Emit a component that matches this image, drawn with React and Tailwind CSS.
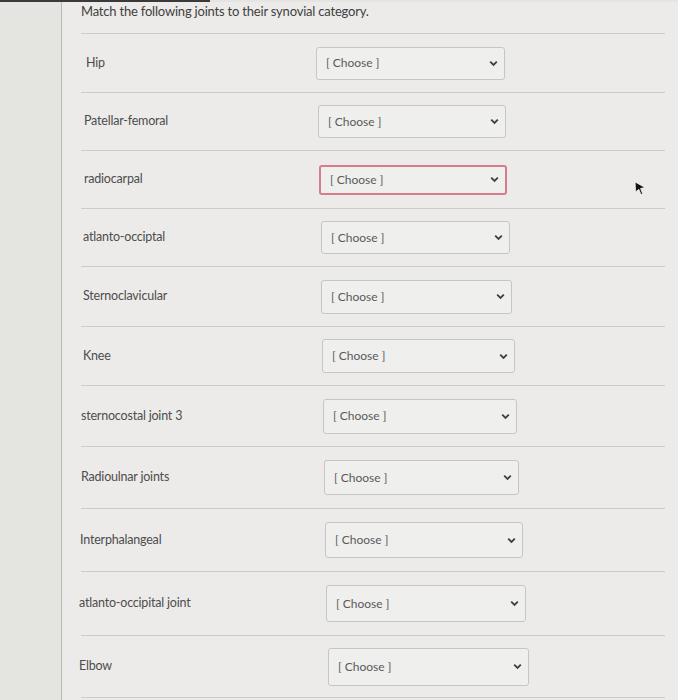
import React from "react";

const rows = [
  { label: "Hip", h: 59, lx: 85, sx: 315, sw: 189, sh: 33 },
  { label: "Patellar-femoral", h: 58, lx: 83, sx: 317, sw: 188, sh: 33 },
  { label: "radiocarpal", h: 58, lx: 83, sx: 318, sw: 188, sh: 30, error: true },
  { label: "atlanto-occiptal", h: 58, lx: 82, sx: 320, sw: 189, sh: 33 },
  { label: "Sternoclavicular", h: 60, lx: 82, sx: 320, sw: 191, sh: 34 },
  { label: "Knee", h: 59, lx: 82, sx: 321, sw: 193, sh: 34 },
  { label: "sternocostal joint 3", h: 61, lx: 80, sx: 322, sw: 194, sh: 35 },
  { label: "Radioulnar joints", h: 62, lx: 80, sx: 323, sw: 195, sh: 35 },
  { label: "Interphalangeal", h: 63, lx: 79, sx: 324, sw: 198, sh: 36 },
  { label: "atlanto-occipital joint", h: 64, lx: 78, sx: 325, sw: 200, sh: 37 },
  { label: "Elbow", h: 62, lx: 78, sx: 327, sw: 201, sh: 38 },
];

const Chevron = () => (
  <svg width="9" height="7" viewBox="0 0 9 7" className="shrink-0">
    <path d="M1.2 1.6 L4.5 4.9 L7.8 1.6" fill="none" stroke="#3f3f3f" strokeWidth="1.8" />
  </svg>
);

const Row = ({ r }) => (
  <div
    className="flex items-center border-t border-[#cbcbc8] ml-[19px] mr-[13px]"
    style={{ height: r.h }}
  >
    <div className="text-[12.5px] text-[#4d4d4d] tracking-[-0.2px]" style={{ marginLeft: r.lx - 80, width: r.sx - r.lx }}>
      {r.label}
    </div>
    <div
      className={
        "flex items-center justify-between pl-[9px] pr-[6px] rounded-[3px] bg-[#efefed] " +
        (r.error ? "border-2 border-[#d87b8b]" : "border border-[#c6c6c3]")
      }
      style={{ width: r.sw, height: r.sh }}
    >
      <span className="text-[12px] text-[#5a5a5a]">[ Choose ]</span>
      <Chevron />
    </div>
  </div>
);

export default function App() {
  return (
    <div className="relative w-[678px] h-[700px] overflow-hidden bg-[#e4e4e1] font-['Lato','Liberation_Sans',sans-serif]">
      <div className="h-[2px] w-[210px] bg-[#3a3a3c]" />
      <div className="ml-[61px] h-[698px] border-l border-[#b9b9b6] bg-[#ecebe9]">
        <div className="h-[31px] pl-[19px] pt-0 text-[13px] text-[#3f3f3f] tracking-[-0.2px]">
          Match the following joints to their synovial category.
        </div>
        {rows.map((r) => (
          <Row key={r.label} r={r} />
        ))}
        <div className="border-t border-[#cbcbc8] ml-[19px] mr-[13px]" />
      </div>
      <svg className="absolute left-[634px] top-[181px]" width="13" height="15" viewBox="0 0 12 14">
        <path d="M1 1 L10 6 L6 7 L8 12 L6.5 12.6 L4.5 7.8 L1.5 10 Z" fill="#111" stroke="#fff" strokeWidth="0.6" />
      </svg>
    </div>
  );
}
